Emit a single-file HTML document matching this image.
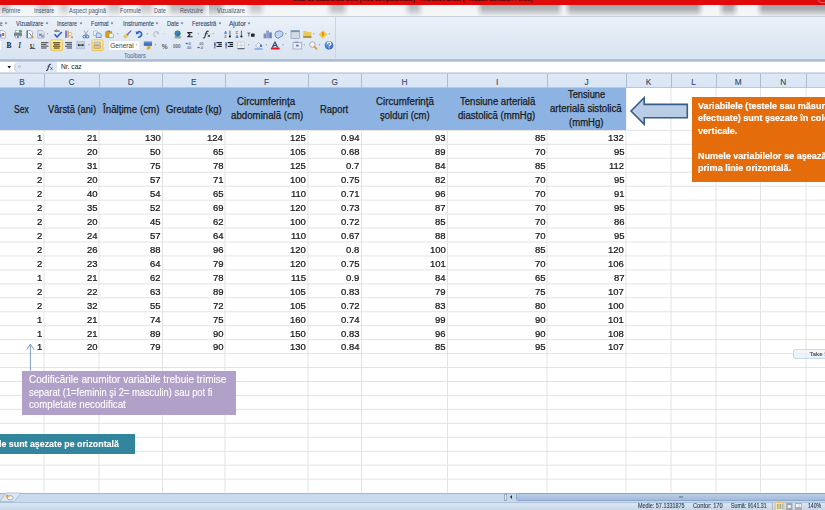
<!DOCTYPE html><html><head><meta charset="utf-8"><style>
*{margin:0;padding:0;box-sizing:border-box}
html,body{width:825px;height:510px;overflow:hidden;background:#fff;font-family:"Liberation Sans",sans-serif}
.a{position:absolute}
.t{position:absolute;white-space:pre;line-height:1;-webkit-text-stroke:0.18px currentColor}
</style></head><body><div id="w" style="position:absolute;left:-4px;top:-4px;width:833px;height:518px;overflow:hidden;filter:blur(0.3px)"><div style="position:absolute;left:4px;top:4px;width:825px;height:510px"><div class="a" style="left:-5px;top:-5px;width:840px;height:9.5px;background:#e10a0a;overflow:hidden"><div class="t" style="left:298.00px;top:-0.60px;font-size:8.5px;font-weight:normal;color:#4a0808;transform:scaleX(0.7066);transform-origin:0 0;-webkit-text-stroke:0.2px currentColor">Date de bază brute 1.xls [Mod compatibilitate] - Microsoft Excel (Product Activation Failed)</div></div>
<svg class="a" style="left:810px;top:0" width="15" height="5"><rect x="8.6" y="-4" width="12" height="6.6" rx="2.5" fill="none" stroke="#e86a6a" stroke-width="0.9"/></svg>
<div class="a" style="left:-5px;top:4.5px;width:840px;height:11.5px;background:linear-gradient(90deg,#f2f4f6 1px,#c0c3c6 8px,#c0c3c6 12px,#f2f4f6 19px,#f2f4f6 39px,#c8cbce 46px,#c8cbce 52px,#f2f4f6 59px,#f2f4f6 61px,#c8cbce 68px,#c8cbce 70px,#f2f4f6 77px,#f2f4f6 109px,#c4c7ca 116px,#c4c7ca 122px,#f2f4f6 129px,#f2f4f6 141px,#c4c7ca 148px,#c4c7ca 154px,#f2f4f6 161px,#f2f4f6 171px,#b8bbbe 178px,#b8bbbe 207px,#f2f4f6 214px,#f2f4f6 207px,#b0b4b8 214px,#b0b4b8 224px,#f2f4f6 231px,#f2f4f6 251px,#c0c3c6 258px,#c0c3c6 264px,#f2f4f6 271px,#f2f4f6 331px,#b8bbbe 338px,#b8bbbe 347px,#f2f4f6 354px,#f2f4f6 409px,#b4bac2 416px,#b4bac2 422px,#f2f4f6 429px,#f2f4f6 481px,#a8adb2 488px,#a8adb2 562px,#f2f4f6 569px,#f2f4f6 569px,#a0a4a8 576px,#a0a4a8 702px,#f2f4f6 709px,#f2f4f6 723px,#a0a4a8 730px,#a0a4a8 737px,#f2f4f6 744px,#f2f4f6 761px,#9ea2a6 768px,#9ea2a6 832px,#f2f4f6 839px)"></div>
<div class="a" style="left:-5px;top:4.5px;width:840px;height:11.5px;background:linear-gradient(rgba(245,247,249,0) 0%,rgba(245,247,249,0.15) 40%,rgba(245,247,249,0.85) 100%)"></div>
<div class="t" style="left:2.00px;top:8.17px;font-size:6.3px;font-weight:normal;color:#4b5a72;transform:scaleX(0.9109);transform-origin:0 0;-webkit-text-stroke:0">Pornire</div>
<div class="t" style="left:34.40px;top:8.17px;font-size:6.3px;font-weight:normal;color:#4b5a72;transform:scaleX(0.8827);transform-origin:0 0;-webkit-text-stroke:0">Inserare</div>
<div class="t" style="left:68.70px;top:8.17px;font-size:6.3px;font-weight:normal;color:#4b5a72;transform:scaleX(0.9241);transform-origin:0 0;-webkit-text-stroke:0">Aspect pagină</div>
<div class="t" style="left:119.50px;top:8.17px;font-size:6.3px;font-weight:normal;color:#4b5a72;transform:scaleX(0.9088);transform-origin:0 0;-webkit-text-stroke:0">Formule</div>
<div class="t" style="left:154.30px;top:8.17px;font-size:6.3px;font-weight:normal;color:#4b5a72;transform:scaleX(0.8867);transform-origin:0 0;-webkit-text-stroke:0">Date</div>
<div class="t" style="left:180.00px;top:8.17px;font-size:6.3px;font-weight:normal;color:#4b5a72;transform:scaleX(0.8759);transform-origin:0 0;-webkit-text-stroke:0">Revizuire</div>
<div class="t" style="left:216.80px;top:8.17px;font-size:6.3px;font-weight:normal;color:#4b5a72;transform:scaleX(0.9087);transform-origin:0 0;-webkit-text-stroke:0">Vizualizare</div>
<div class="a" style="left:-5px;top:16px;width:840px;height:43px;background:linear-gradient(#eaf1f9,#e2eaf5 45%,#d9e4f1);border-top:1px solid #c9d2dc"></div>
<div class="a" style="left:335px;top:17px;width:1px;height:41px;background:#c9d5e4"></div>
<div class="a" style="left:-5px;top:58.7px;width:840px;height:3.4px;background:linear-gradient(#bccbdd,#a6b9d0 45%,#b4c5d9 70%,#d2ddea)"></div>
<div class="t" style="left:-0.50px;top:20.98px;font-size:6.4px;font-weight:normal;color:#33476a;transform:scaleX(0.7023);transform-origin:0 0;-webkit-text-stroke:0.1px currentColor">e</div>
<svg class="a" style="left:3.5px;top:21px" width="4" height="4"><path d="M0.6,1.6 h2.8 l-1.4,1.8z" fill="#66748a"/></svg>
<div class="t" style="left:16.00px;top:20.98px;font-size:6.4px;font-weight:normal;color:#33476a;transform:scaleX(0.8785);transform-origin:0 0;-webkit-text-stroke:0.1px currentColor">Vizualizare</div>
<svg class="a" style="left:44.6px;top:21px" width="4" height="4"><path d="M0.6,1.6 h2.8 l-1.4,1.8z" fill="#66748a"/></svg>
<div class="t" style="left:57.00px;top:20.98px;font-size:6.4px;font-weight:normal;color:#33476a;transform:scaleX(0.8518);transform-origin:0 0;-webkit-text-stroke:0.1px currentColor">Inserare</div>
<svg class="a" style="left:78.7px;top:21px" width="4" height="4"><path d="M0.6,1.6 h2.8 l-1.4,1.8z" fill="#66748a"/></svg>
<div class="t" style="left:91.20px;top:20.98px;font-size:6.4px;font-weight:normal;color:#33476a;transform:scaleX(0.8683);transform-origin:0 0;-webkit-text-stroke:0.1px currentColor">Format</div>
<svg class="a" style="left:110.3px;top:21px" width="4" height="4"><path d="M0.6,1.6 h2.8 l-1.4,1.8z" fill="#66748a"/></svg>
<div class="t" style="left:122.50px;top:20.98px;font-size:6.4px;font-weight:normal;color:#33476a;transform:scaleX(0.9173);transform-origin:0 0;-webkit-text-stroke:0.1px currentColor">Instrumente</div>
<svg class="a" style="left:154.8px;top:21px" width="4" height="4"><path d="M0.6,1.6 h2.8 l-1.4,1.8z" fill="#66748a"/></svg>
<div class="t" style="left:167.10px;top:20.98px;font-size:6.4px;font-weight:normal;color:#33476a;transform:scaleX(0.8728);transform-origin:0 0;-webkit-text-stroke:0.1px currentColor">Date</div>
<svg class="a" style="left:180.4px;top:21px" width="4" height="4"><path d="M0.6,1.6 h2.8 l-1.4,1.8z" fill="#66748a"/></svg>
<div class="t" style="left:192.30px;top:20.98px;font-size:6.4px;font-weight:normal;color:#33476a;transform:scaleX(0.8872);transform-origin:0 0;-webkit-text-stroke:0.1px currentColor">Fereastră</div>
<svg class="a" style="left:217.8px;top:21px" width="4" height="4"><path d="M0.6,1.6 h2.8 l-1.4,1.8z" fill="#66748a"/></svg>
<div class="t" style="left:228.80px;top:20.98px;font-size:6.4px;font-weight:normal;color:#33476a;transform:scaleX(1.0108);transform-origin:0 0;-webkit-text-stroke:0.1px currentColor">Ajutor</div>
<svg class="a" style="left:247.1px;top:21px" width="4" height="4"><path d="M0.6,1.6 h2.8 l-1.4,1.8z" fill="#66748a"/></svg>
<div class="t" style="left:124.40px;top:52.88px;font-size:6.4px;font-weight:normal;color:#66768f;transform:scaleX(0.9011);transform-origin:0 0;-webkit-text-stroke:0.1px currentColor">Toolbars</div>
<svg class="a" style="left:0;top:26px;overflow:visible" width="340" height="26" viewBox="0 26 340 26"><defs>
<linearGradient id="gy" x1="0" y1="0" x2="0" y2="1"><stop offset="0" stop-color="#fff3b8"/><stop offset="1" stop-color="#fddc6a"/></linearGradient>
<linearGradient id="gb" x1="0" y1="0" x2="0" y2="1"><stop offset="0" stop-color="#6e96d8"/><stop offset="1" stop-color="#2f5fb0"/></linearGradient>
<radialGradient id="gh" cx="0.4" cy="0.35" r="0.7"><stop offset="0" stop-color="#7aa6e6"/><stop offset="1" stop-color="#2a5cb4"/></radialGradient>
</defs>
<g>
<!-- row 1 -->
<path d="M0,30.5 h3.5 l2,2 v5.5 h-5.5z" fill="#f4f6fa" stroke="#8d9db4" stroke-width="0.6"/><rect x="2.2" y="33" width="2" height="3" fill="#e24a3a"/><rect x="0" y="34" width="1.6" height="3" fill="#5a86c8"/>
<!-- printer -->
<rect x="15.5" y="30.4" width="5" height="3" fill="#f6f7f9" stroke="#8e949c" stroke-width="0.5"/>
<rect x="14" y="32.6" width="8" height="4" rx="0.8" fill="#7c828a"/><rect x="15.5" y="35.8" width="5" height="2.2" fill="#eef2f8" stroke="#8e949c" stroke-width="0.4"/><rect x="17" y="36" width="2" height="1.8" fill="#4b8be0"/>
<circle cx="20.5" cy="31.3" r="1.5" fill="#3fae48"/>
<!-- print preview -->
<path d="M26.8,30.6 h4.2 l1.6,1.6 v5.8 h-5.8z" fill="#fbfcfe" stroke="#6b7d98" stroke-width="0.6"/><rect x="26.8" y="30.6" width="1" height="7.4" fill="#3f5a88"/><circle cx="32.3" cy="37" r="1.3" fill="#e39a2c"/><path d="M29.5,33 l2,3" stroke="#4a6fa8" stroke-width="0.8"/>
<!-- third doc icon -->
<path d="M37.8,30.6 h4.5 l1.8,1.8 v5.6 h-6.3z" fill="#e7ebf2" stroke="#8a96a8" stroke-width="0.6"/><rect x="39" y="33.5" width="3.2" height="2.6" fill="#6e9bd8"/><rect x="41" y="35" width="3" height="2.5" fill="#9aa4b2"/>
<path d="M46.8,33.6 h1.6 l-0.8,0.9z" fill="#5b6677"/>
<!-- spell check -->
<text x="54.2" y="32.3" font-size="3.2" font-weight="bold" fill="#3a3f48" font-family="Liberation Sans">abc</text>
<path d="M54.6,34.3 l2.4,2.8 l4.8,-5" stroke="#2a57c6" stroke-width="1.5" fill="none" stroke-linejoin="round"/>
<!-- research -->
<rect x="65" y="30.6" width="2.6" height="7.2" fill="#8a78d6"/><rect x="67.4" y="30.8" width="5" height="6.8" fill="#ede8d0"/><rect x="67.6" y="30.8" width="1.4" height="6.8" fill="#d8b040"/><circle cx="70.2" cy="34" r="1.6" fill="#f8f8f8" stroke="#888" stroke-width="0.4"/><circle cx="72" cy="37.3" r="1" fill="#d48a20"/>
<!-- scissors -->
<path d="M84,30.5 l2.5,4.5 M88,30.5 l-2.5,4.5" stroke="#8a9098" stroke-width="0.8"/>
<circle cx="84.4" cy="36.6" r="1.4" fill="none" stroke="#3b63c0" stroke-width="1"/><circle cx="87.4" cy="36.6" r="1.4" fill="none" stroke="#3b63c0" stroke-width="1"/>
<!-- copy -->
<path d="M93.5,31 h3.5 l1.3,1.3 v3.2 h-4.8z" fill="#f3f6fb" stroke="#7f93b8" stroke-width="0.5"/>
<path d="M96.2,33 h3.5 l1.5,1.5 v3 h-5z" fill="#c8dbf4" stroke="#3d6bc0" stroke-width="0.6"/>
<!-- paste -->
<rect x="105.7" y="31.4" width="6" height="6" rx="0.6" fill="#e0a420" stroke="#a2741a" stroke-width="0.5"/><rect x="107.4" y="30.6" width="2.6" height="1.5" fill="#7a7f88"/>
<path d="M109,33.3 h3 l1.4,1.4 v3 h-4.4z" fill="#f7f9fc" stroke="#6c7580" stroke-width="0.5"/>
<path d="M116.8,33.6 h1.6 l-0.8,0.9z" fill="#5b6677"/>
<!-- format painter -->
<path d="M123.5,36.3 l3.2,-2.6 l1.6,1.8 l-2.8,2.8z" fill="#f0d050" stroke="#b8942a" stroke-width="0.4"/>
<path d="M127.5,34.5 l3.4,-3.6" stroke="#6b5cc0" stroke-width="1.3" stroke-linecap="round"/>
<!-- undo -->
<path d="M137,32.8 q3.5,-2.6 4.6,0.8 q0.6,2.4 -3,3.6" stroke="#2d66cf" stroke-width="1.6" fill="none" stroke-linecap="round"/><path d="M135.6,31 l0.6,3.6 l3,-1.2z" fill="#2d66cf"/>
<path d="M146.5,33.6 h1.6 l-0.8,0.9z" fill="#5b6677"/>
<!-- redo (disabled) -->
<path d="M158.5,32.8 q-3.5,-2.6 -4.6,0.8 q-0.4,2 1.6,3.4" stroke="#b9c0ca" stroke-width="1.2" fill="none"/><path d="M159.2,31.2 l-0.4,3.2 l-2.6,-1z" fill="#b9c0ca"/>
<path d="M163,33.6 h1.6 l-0.8,0.9z" fill="#b5bcc6"/>
<!-- globe -->
<ellipse cx="177.8" cy="37.3" rx="3.6" ry="1.2" fill="#8ea3c8"/>
<circle cx="177.6" cy="33.6" r="3" fill="#2c8a3e"/><path d="M175.2,32.6 q2,-2.4 4.6,-1 q-1,2 -2.2,1.4 q-1.2,1.6 0.4,3.6 q-2.4,0 -2.8,-4z" fill="#3f7fd8"/>
<!-- sigma -->
<path d="M187.3,32 h5 v1.2 h-3.2 l1.8,1.5 l-1.8,1.5 h3.4 v1 h-5.2 v-0.9 l2,-1.6 l-2,-1.6z" fill="#1d1f24"/>
<path d="M197.5,33.6 h1.6 l-0.8,0.9z" fill="#5b6677"/>
<!-- fx -->
<path d="M208.2,31.3 q-1.5,-0.4 -2.2,1.8 l-1.2,3.8 q-0.5,1.1 -1.3,0.9" stroke="#45494f" stroke-width="1.3" fill="none" stroke-linecap="round"/><path d="M204.8,33.6 h3" stroke="#45494f" stroke-width="0.8"/><path d="M207.8,34.6 l2.2,2.4 M210,34.6 l-2.2,2.4" stroke="#45494f" stroke-width="1"/>
<path d="M212.3,33.6 h1.6 l-0.8,0.9z" fill="#5b6677"/>
<!-- sort AZ -->
<text x="224.1" y="33.8" font-size="4" font-weight="bold" fill="#3a6cc8" font-family="Liberation Sans">A</text><text x="224.3" y="37.9" font-size="4" font-weight="bold" fill="#cc4036" font-family="Liberation Sans">Z</text>
<rect x="229.4" y="30.6" width="1.1" height="5.5" fill="#6d737c"/><circle cx="229.95" cy="36.5" r="1.1" fill="#1d1f24"/>
<!-- sort ZA -->
<text x="235.6" y="33.8" font-size="4" font-weight="bold" fill="#cc4036" font-family="Liberation Sans">Z</text><text x="235.5" y="37.9" font-size="4" font-weight="bold" fill="#3a6cc8" font-family="Liberation Sans">A</text>
<rect x="240.9" y="30.6" width="1.1" height="5.5" fill="#6d737c"/><circle cx="241.45" cy="36.5" r="1.1" fill="#1d1f24"/>
<!-- filter -->
<path d="M247,32.6 h3.6 l-1.3,1.6 v2.4 h-1 v-2.4z" fill="#6a6f78"/><rect x="251" y="33.6" width="3.6" height="3.2" rx="0.6" fill="#22252b"/>
<!-- chart -->
<rect x="263.6" y="33.5" width="2.4" height="4.8" fill="#7a8fbc"/><rect x="266.2" y="30.6" width="2.8" height="7.7" fill="#8a9ec8"/><rect x="269.2" y="32.4" width="2.6" height="5.9" fill="#6b82b4"/>
<!-- shapes -->
<path d="M275,34.5 q0,-3.5 3.8,-3.6 q4.2,0 4.2,3.2 q0,2.6 -3,3 q-0.8,1.5 -2.6,1 q-2.4,-0.6 -2.4,-3.6z" fill="#c2d6f2" stroke="#4d78bd" stroke-width="0.8"/>
<path d="M285,33.6 h1.6 l-0.8,0.9z" fill="#5b6677"/>
<!-- form window -->
<rect x="291" y="30.6" width="8.4" height="7.8" fill="#d5dbe4" stroke="#7f90ab" stroke-width="0.6"/><rect x="291" y="30.6" width="8.4" height="1.5" fill="#6c8fcf"/>
<!-- folder -->
<path d="M303.2,31 h3 l1,1 h4.2 v5.7 h-8.2z" fill="#e8c95a"/><rect x="303.2" y="36.3" width="8.2" height="1.4" fill="#9a7a2a"/>
<path d="M313,33.6 h1.6 l-0.8,0.9z" fill="#5b6677"/>
<!-- diamond -->
<path d="M322.9,30.7 l3.9,3.8 l-3.9,3.8 l-3.9,-3.8z" fill="#f6cf2a" stroke="#e0a020" stroke-width="0.4"/><rect x="322.3" y="32.2" width="1.3" height="3.6" fill="#e8661e"/>
<path d="M328.5,33.6 h1.6 l-0.8,0.9z" fill="#5b6677"/>

<!-- row 2 -->
<rect x="-1" y="40.6" width="2.6" height="9.6" fill="#fff" stroke="#cdd8e6" stroke-width="0.5"/>
<text x="6.4" y="48.4" font-size="7.4" font-weight="bold" fill="#1a1a1a" font-family="Liberation Serif">B</text>
<text x="18.2" y="48.4" font-size="7.2" font-style="italic" font-weight="bold" fill="#3b3f46" font-family="Liberation Serif">I</text>
<text x="29.8" y="47.6" font-size="6.6" font-weight="bold" fill="#2e3238" font-family="Liberation Serif">U</text><rect x="29.8" y="48.2" width="5.4" height="0.8" fill="#2e3238"/>
<g fill="#5a5f66"><rect x="41" y="42" width="7.5" height="1.2"/><rect x="41" y="43.8" width="5.5" height="1.2"/><rect x="41" y="45.6" width="7.5" height="1.2"/><rect x="41" y="47.4" width="5.5" height="1.2"/></g>
<rect x="50.8" y="39.9" width="11.7" height="10.8" rx="1.2" fill="url(#gy)" stroke="#e6bb4e" stroke-width="0.8"/>
<g fill="#6d5d2e"><rect x="53" y="42" width="7.4" height="1.3"/><rect x="53.8" y="43.8" width="5.8" height="1.3"/><rect x="53" y="45.6" width="7.4" height="1.3"/><rect x="53.8" y="47.4" width="5.8" height="1.3"/></g>
<g fill="#5a5f66"><rect x="65" y="42" width="7" height="1.2"/><rect x="66.6" y="43.8" width="5.4" height="1.2"/><rect x="65" y="45.6" width="7" height="1.2"/><rect x="66.6" y="47.4" width="5.4" height="1.2"/></g>
<!-- merge -->
<rect x="76.8" y="41.3" width="7.9" height="7.6" fill="#c5d3e8" stroke="#96a6be" stroke-width="0.4"/><rect x="78" y="44.6" width="5.6" height="1" fill="#22252b"/><path d="M77.6,45.1 l1.6,-1.3 v2.6z M83.9,45.1 l-1.6,-1.3 v2.6z" fill="#22252b"/>
<path d="M88.2,44.6 h1.6 l-0.8,0.9z" fill="#5b6677"/>
<!-- wrap text -->
<rect x="92.1" y="39.9" width="10.9" height="10.8" rx="1.2" fill="url(#gy)" stroke="#e6bb4e" stroke-width="0.8"/>
<rect x="94" y="42" width="6.6" height="2.4" fill="#c8d4e8" stroke="#8c7a48" stroke-width="0.4"/><rect x="94" y="45.6" width="6.6" height="2.6" fill="#e8b8a0" stroke="#8c7a48" stroke-width="0.4"/>
<!-- general combo -->
<rect x="108.4" y="40.8" width="31.4" height="9.4" fill="#fff" stroke="#d4deea" stroke-width="0.6"/>
<text x="110.2" y="47.5" font-size="6.6" fill="#3b3f46" font-family="Liberation Sans">General</text>
<path d="M135.7,44.6 h1.6 l-0.8,0.9z" fill="#5b6677"/>
<!-- currency -->
<rect x="143.8" y="41.4" width="8.2" height="4.4" fill="url(#gb)"/><path d="M147.5,46 h3 v2.6 q-1.6,1.4 -4,0.6z" fill="#e2a834"/>
<path d="M154.8,44.6 h1.6 l-0.8,0.9z" fill="#5b6677"/>
<text x="161.8" y="48.6" font-size="6.6" font-weight="bold" fill="#5a5f66" font-family="Liberation Sans">%</text>
<text x="173" y="48.2" font-size="4.6" font-weight="bold" fill="#6a6f78" font-family="Liberation Sans">000</text>
<!-- inc decimal -->
<text x="187.8" y="44.6" font-size="3.6" font-weight="bold" fill="#6a6f78" font-family="Liberation Sans">.0</text><text x="186.2" y="49" font-size="3.6" font-weight="bold" fill="#6a6f78" font-family="Liberation Sans">.00</text><path d="M185.2,43.4 l1.8,-1 v2z" fill="#2e66d6"/><rect x="186.6" y="43" width="1.6" height="0.8" fill="#2e66d6"/>
<!-- dec decimal -->
<text x="198.6" y="44.6" font-size="3.6" font-weight="bold" fill="#6a6f78" font-family="Liberation Sans">.00</text><text x="200" y="49" font-size="3.6" font-weight="bold" fill="#6a6f78" font-family="Liberation Sans">.0</text><path d="M197,47.4 l1.8,-1 v2z" fill="#2e66d6"/><rect x="198.4" y="47" width="1.6" height="0.8" fill="#2e66d6"/>
<!-- indent -->
<g fill="#23262c"><rect x="216.5" y="42" width="5.3" height="1.2"/><rect x="218.4" y="43.9" width="3.4" height="1.2"/><rect x="216.5" y="45.8" width="5.3" height="1.2"/></g><rect x="214" y="42" width="1.4" height="6.5" fill="#7a8088"/><path d="M213.6,44.5 l2.2,-1.3 v2.6z" fill="#2e66d6"/>
<g fill="#23262c"><rect x="227.8" y="42" width="5.3" height="1.2"/><rect x="229.7" y="43.9" width="3.4" height="1.2"/><rect x="227.8" y="45.8" width="5.3" height="1.2"/></g><rect x="225.4" y="42" width="1.4" height="6.5" fill="#7a8088"/><path d="M224.8,44.5 l2.2,-1.3 v2.6z" fill="#2e66d6"/>
<!-- borders -->
<rect x="237.6" y="42" width="6.9" height="6.8" fill="#f2f4f7" stroke="#b4bcc8" stroke-width="0.5"/><line x1="241.05" y1="42" x2="241.05" y2="48.8" stroke="#b4bcc8" stroke-width="0.5"/><line x1="237.6" y1="45.4" x2="244.5" y2="45.4" stroke="#b4bcc8" stroke-width="0.5"/><rect x="237.6" y="48.2" width="6.9" height="1" fill="#4a4f58"/>
<path d="M248,44.6 h1.6 l-0.8,0.9z" fill="#5b6677"/>
<!-- fill color -->
<path d="M255.5,45.4 l3,-3 l3,3 l-3,2.6z" fill="#eef2f8" stroke="#7d8796" stroke-width="0.5"/><circle cx="261" cy="45.8" r="1.2" fill="#3a74d8"/><rect x="254.5" y="48.4" width="8" height="1.2" fill="#5f9ae6"/>
<path d="M265.6,44.6 h1.6 l-0.8,0.9z" fill="#5b6677"/>
<!-- font color -->
<path d="M271.6,47.6 l3,-6 h0.8 l2.9,6 h-1.5 l-0.7,-1.5 h-2.2 l-0.7,1.5z M274.1,45.1 h1.7 l-0.85,-2z" fill="#2f4170" fill-rule="evenodd"/>
<rect x="270.9" y="47.4" width="8.8" height="2.1" rx="0.6" fill="#e8141a"/>
<path d="M282.2,44.6 h1.6 l-0.8,0.9z" fill="#5b6677"/>
<!-- camera -->
<rect x="293" y="42.4" width="8.8" height="6.6" fill="#e9edf3" stroke="#8792a2" stroke-width="0.6"/><rect x="294.5" y="41.6" width="4" height="1.2" fill="#8792a2"/><rect x="296.2" y="44.7" width="2.4" height="1.8" fill="#3c74d6"/>
<path d="M303.4,44.6 h1.6 l-0.8,0.9z" fill="#5b6677"/>
<!-- zoom -->
<circle cx="312.4" cy="44.6" r="2.8" fill="#f8fafd" stroke="#9aa3ae" stroke-width="0.9"/><path d="M314.3,46.6 l2.2,2.3" stroke="#d59b2a" stroke-width="1.6" stroke-linecap="round"/>
<path d="M318.7,44.6 h1.6 l-0.8,0.9z" fill="#5b6677"/>
<!-- help -->
<circle cx="329" cy="45.25" r="4.3" fill="url(#gh)"/>
<path d="M327.4,44 q0,-1.9 1.7,-1.9 q1.8,0 1.8,1.6 q0,1 -1.1,1.5 q-0.6,0.3 -0.6,1" stroke="#fff" stroke-width="1.1" fill="none"/><circle cx="329.15" cy="47.8" r="0.65" fill="#fff"/>
</g>
</svg>
<div class="a" style="left:-5px;top:62px;width:840px;height:10.5px;background:#fff"></div>
<div class="a" style="left:14px;top:62px;width:42.5px;height:10.5px;background:#dfe8f4;border-radius:6px 0 0 6px;border-left:1px solid #b9c9dc"></div>
<div class="a" style="left:17.9px;top:64.9px;width:3px;height:3px;border-radius:50%;border:0.6px solid #b0bccb;background:#e9eef5"></div>
<svg class="a" style="left:0;top:0" width="20" height="80"><path d="M7.5,65.9 h3.5 l-1.75,2.6z" fill="#111"/></svg>
<svg class="a" style="left:0;top:0" width="60" height="80"><path d="M50.6,64.3 q-1.2,-0.3 -1.8,1.6 l-1.1,3.6 q-0.5,1.1 -1.2,0.9" stroke="#2e3f5c" stroke-width="1.1" fill="none" stroke-linecap="round"/><path d="M47.6,66.2 h2.6" stroke="#2e3f5c" stroke-width="0.7"/><path d="M50.6,67.4 l1.8,2.2 M52.4,67.4 l-1.8,2.2" stroke="#2e3f5c" stroke-width="0.9"/></svg>
<div class="t" style="left:60.50px;top:63.00px;font-size:7.8px;font-weight:normal;color:#222;transform:scaleX(0.8528);transform-origin:0 0;-webkit-text-stroke:0.05px currentColor">Nr. caz</div>
<div class="a" style="left:-5px;top:71.7px;width:840px;height:2.7px;background:linear-gradient(#dbe4ee,#b9c9db)"></div>
<div class="a" style="left:-5px;top:74.4px;width:840px;height:13.6px;background:linear-gradient(#e0e9f6,#d9e5f4)"></div>
<div class="a" style="left:-5px;top:87.2px;width:840px;height:1px;background:#b7c8dc"></div>
<div class="t" style="left:0px;width:44px;text-align:center;top:77.9px;font-size:8.3px;color:#30476a;-webkit-text-stroke:0.1px currentColor">B</div>
<div class="t" style="left:44px;width:55px;text-align:center;top:77.9px;font-size:8.3px;color:#30476a;-webkit-text-stroke:0.1px currentColor">C</div>
<div class="t" style="left:99px;width:63.5px;text-align:center;top:77.9px;font-size:8.3px;color:#30476a;-webkit-text-stroke:0.1px currentColor">D</div>
<div class="t" style="left:162.5px;width:62.5px;text-align:center;top:77.9px;font-size:8.3px;color:#30476a;-webkit-text-stroke:0.1px currentColor">E</div>
<div class="t" style="left:225px;width:83px;text-align:center;top:77.9px;font-size:8.3px;color:#30476a;-webkit-text-stroke:0.1px currentColor">F</div>
<div class="t" style="left:308px;width:53.5px;text-align:center;top:77.9px;font-size:8.3px;color:#30476a;-webkit-text-stroke:0.1px currentColor">G</div>
<div class="t" style="left:361.5px;width:86.0px;text-align:center;top:77.9px;font-size:8.3px;color:#30476a;-webkit-text-stroke:0.1px currentColor">H</div>
<div class="t" style="left:447.5px;width:99.5px;text-align:center;top:77.9px;font-size:8.3px;color:#30476a;-webkit-text-stroke:0.1px currentColor">I</div>
<div class="t" style="left:547px;width:79px;text-align:center;top:77.9px;font-size:8.3px;color:#30476a;-webkit-text-stroke:0.1px currentColor">J</div>
<div class="t" style="left:626px;width:45px;text-align:center;top:77.9px;font-size:8.3px;color:#30476a;-webkit-text-stroke:0.1px currentColor">K</div>
<div class="t" style="left:671px;width:45px;text-align:center;top:77.9px;font-size:8.3px;color:#30476a;-webkit-text-stroke:0.1px currentColor">L</div>
<div class="t" style="left:716px;width:44.5px;text-align:center;top:77.9px;font-size:8.3px;color:#30476a;-webkit-text-stroke:0.1px currentColor">M</div>
<div class="t" style="left:760.5px;width:45.5px;text-align:center;top:77.9px;font-size:8.3px;color:#30476a;-webkit-text-stroke:0.1px currentColor">N</div>
<div class="a" style="left:43.5px;top:74.4px;width:1px;height:13.6px;background:#abbdd3"></div>
<div class="a" style="left:98.5px;top:74.4px;width:1px;height:13.6px;background:#abbdd3"></div>
<div class="a" style="left:162.0px;top:74.4px;width:1px;height:13.6px;background:#abbdd3"></div>
<div class="a" style="left:224.5px;top:74.4px;width:1px;height:13.6px;background:#abbdd3"></div>
<div class="a" style="left:307.5px;top:74.4px;width:1px;height:13.6px;background:#abbdd3"></div>
<div class="a" style="left:361.0px;top:74.4px;width:1px;height:13.6px;background:#abbdd3"></div>
<div class="a" style="left:447.0px;top:74.4px;width:1px;height:13.6px;background:#abbdd3"></div>
<div class="a" style="left:546.5px;top:74.4px;width:1px;height:13.6px;background:#abbdd3"></div>
<div class="a" style="left:625.5px;top:74.4px;width:1px;height:13.6px;background:#abbdd3"></div>
<div class="a" style="left:670.5px;top:74.4px;width:1px;height:13.6px;background:#abbdd3"></div>
<div class="a" style="left:715.5px;top:74.4px;width:1px;height:13.6px;background:#abbdd3"></div>
<div class="a" style="left:760.0px;top:74.4px;width:1px;height:13.6px;background:#abbdd3"></div>
<div class="a" style="left:805.5px;top:74.4px;width:1px;height:13.6px;background:#abbdd3"></div>
<div class="a" style="left:850.5px;top:74.4px;width:1px;height:13.6px;background:#abbdd3"></div>
<svg class="a" style="left:0;top:0" width="825" height="510"><g stroke="#e2e3e4" stroke-width="1"><line x1="0" x2="825" y1="130.40" y2="130.40"/><line x1="0" x2="825" y1="144.35" y2="144.35"/><line x1="0" x2="825" y1="158.30" y2="158.30"/><line x1="0" x2="825" y1="172.25" y2="172.25"/><line x1="0" x2="825" y1="186.20" y2="186.20"/><line x1="0" x2="825" y1="200.15" y2="200.15"/><line x1="0" x2="825" y1="214.10" y2="214.10"/><line x1="0" x2="825" y1="228.05" y2="228.05"/><line x1="0" x2="825" y1="242.00" y2="242.00"/><line x1="0" x2="825" y1="255.95" y2="255.95"/><line x1="0" x2="825" y1="269.90" y2="269.90"/><line x1="0" x2="825" y1="283.85" y2="283.85"/><line x1="0" x2="825" y1="297.80" y2="297.80"/><line x1="0" x2="825" y1="311.75" y2="311.75"/><line x1="0" x2="825" y1="325.70" y2="325.70"/><line x1="0" x2="825" y1="339.65" y2="339.65"/><line x1="0" x2="825" y1="353.60" y2="353.60"/><line x1="0" x2="825" y1="367.55" y2="367.55"/><line x1="0" x2="825" y1="381.50" y2="381.50"/><line x1="0" x2="825" y1="395.45" y2="395.45"/><line x1="0" x2="825" y1="409.40" y2="409.40"/><line x1="0" x2="825" y1="423.35" y2="423.35"/><line x1="0" x2="825" y1="437.30" y2="437.30"/><line x1="0" x2="825" y1="451.25" y2="451.25"/><line x1="0" x2="825" y1="465.20" y2="465.20"/><line x1="0" x2="825" y1="479.15" y2="479.15"/><line x1="44" x2="44" y1="88.0" y2="492.6"/><line x1="99" x2="99" y1="88.0" y2="492.6"/><line x1="162.5" x2="162.5" y1="88.0" y2="492.6"/><line x1="225" x2="225" y1="88.0" y2="492.6"/><line x1="308" x2="308" y1="88.0" y2="492.6"/><line x1="361.5" x2="361.5" y1="88.0" y2="492.6"/><line x1="447.5" x2="447.5" y1="88.0" y2="492.6"/><line x1="547" x2="547" y1="88.0" y2="492.6"/><line x1="626" x2="626" y1="88.0" y2="492.6"/><line x1="671" x2="671" y1="88.0" y2="492.6"/><line x1="716" x2="716" y1="88.0" y2="492.6"/><line x1="760.5" x2="760.5" y1="88.0" y2="492.6"/><line x1="806" x2="806" y1="88.0" y2="492.6"/><line x1="851" x2="851" y1="88.0" y2="492.6"/></g></svg>
<div class="a" style="left:0;top:88.0px;width:626px;height:42.400000000000006px;background:#8db3e2"></div>
<div class="t" style="left:14.00px;top:104.53px;font-size:10.0px;font-weight:normal;color:#1a1a1a;transform:scaleX(0.8531);transform-origin:0 0;-webkit-text-stroke:0.25px currentColor">Sex</div>
<div class="t" style="left:48.00px;top:104.53px;font-size:10.0px;font-weight:normal;color:#1a1a1a;transform:scaleX(0.9287);transform-origin:0 0;-webkit-text-stroke:0.25px currentColor">Vârstă (ani)</div>
<div class="t" style="left:103.10px;top:104.53px;font-size:10.0px;font-weight:normal;color:#1a1a1a;transform:scaleX(0.9760);transform-origin:0 0;-webkit-text-stroke:0.25px currentColor">Înălţime (cm)</div>
<div class="t" style="left:166.30px;top:104.53px;font-size:10.0px;font-weight:normal;color:#1a1a1a;transform:scaleX(0.9438);transform-origin:0 0;-webkit-text-stroke:0.25px currentColor">Greutate (kg)</div>
<div class="t" style="left:237.30px;top:97.13px;font-size:10.0px;font-weight:normal;color:#1a1a1a;transform:scaleX(0.9771);transform-origin:0 0;-webkit-text-stroke:0.25px currentColor">Circumferinţa</div>
<div class="t" style="left:230.50px;top:110.73px;font-size:10.0px;font-weight:normal;color:#1a1a1a;transform:scaleX(0.9694);transform-origin:0 0;-webkit-text-stroke:0.25px currentColor">abdominală (cm)</div>
<div class="t" style="left:320.40px;top:104.53px;font-size:10.0px;font-weight:normal;color:#1a1a1a;transform:scaleX(0.9362);transform-origin:0 0;-webkit-text-stroke:0.25px currentColor">Raport</div>
<div class="t" style="left:375.80px;top:97.13px;font-size:10.0px;font-weight:normal;color:#1a1a1a;transform:scaleX(0.9721);transform-origin:0 0;-webkit-text-stroke:0.25px currentColor">Circumferinţă</div>
<div class="t" style="left:380.40px;top:110.73px;font-size:10.0px;font-weight:normal;color:#1a1a1a;transform:scaleX(0.9516);transform-origin:0 0;-webkit-text-stroke:0.25px currentColor">şolduri (cm)</div>
<div class="t" style="left:459.60px;top:97.13px;font-size:10.0px;font-weight:normal;color:#1a1a1a;transform:scaleX(0.9539);transform-origin:0 0;-webkit-text-stroke:0.25px currentColor">Tensiune arterială</div>
<div class="t" style="left:458.40px;top:110.73px;font-size:10.0px;font-weight:normal;color:#1a1a1a;transform:scaleX(0.9581);transform-origin:0 0;-webkit-text-stroke:0.25px currentColor">diastolică (mmHg)</div>
<div class="t" style="left:567.70px;top:90.33px;font-size:10.0px;font-weight:normal;color:#1a1a1a;transform:scaleX(0.9268);transform-origin:0 0;-webkit-text-stroke:0.25px currentColor">Tensiune</div>
<div class="t" style="left:550.20px;top:104.23px;font-size:10.0px;font-weight:normal;color:#1a1a1a;transform:scaleX(0.9614);transform-origin:0 0;-webkit-text-stroke:0.25px currentColor">arterială sistolică</div>
<div class="t" style="left:569.20px;top:117.63px;font-size:10.0px;font-weight:normal;color:#1a1a1a;transform:scaleX(0.9555);transform-origin:0 0;-webkit-text-stroke:0.25px currentColor">(mmHg)</div>
<div class="t" style="left:36.91px;top:133.20px;font-size:9.8px;font-weight:normal;color:#161616;transform:scaleX(0.9700);transform-origin:0 0;-webkit-text-stroke:0.24px currentColor">1</div>
<div class="t" style="left:86.63px;top:133.20px;font-size:9.8px;font-weight:normal;color:#161616;transform:scaleX(0.9700);transform-origin:0 0;-webkit-text-stroke:0.24px currentColor">21</div>
<div class="t" style="left:144.84px;top:133.20px;font-size:9.8px;font-weight:normal;color:#161616;transform:scaleX(0.9700);transform-origin:0 0;-webkit-text-stroke:0.24px currentColor">130</div>
<div class="t" style="left:207.34px;top:133.20px;font-size:9.8px;font-weight:normal;color:#161616;transform:scaleX(0.9700);transform-origin:0 0;-webkit-text-stroke:0.24px currentColor">124</div>
<div class="t" style="left:290.34px;top:133.20px;font-size:9.8px;font-weight:normal;color:#161616;transform:scaleX(0.9700);transform-origin:0 0;-webkit-text-stroke:0.24px currentColor">125</div>
<div class="t" style="left:341.20px;top:133.20px;font-size:9.8px;font-weight:normal;color:#161616;transform:scaleX(0.9700);transform-origin:0 0;-webkit-text-stroke:0.24px currentColor">0.94</div>
<div class="t" style="left:435.13px;top:133.20px;font-size:9.8px;font-weight:normal;color:#161616;transform:scaleX(0.9700);transform-origin:0 0;-webkit-text-stroke:0.24px currentColor">93</div>
<div class="t" style="left:534.63px;top:133.20px;font-size:9.8px;font-weight:normal;color:#161616;transform:scaleX(0.9700);transform-origin:0 0;-webkit-text-stroke:0.24px currentColor">85</div>
<div class="t" style="left:608.34px;top:133.20px;font-size:9.8px;font-weight:normal;color:#161616;transform:scaleX(0.9700);transform-origin:0 0;-webkit-text-stroke:0.24px currentColor">132</div>
<div class="t" style="left:36.91px;top:147.15px;font-size:9.8px;font-weight:normal;color:#161616;transform:scaleX(0.9700);transform-origin:0 0;-webkit-text-stroke:0.24px currentColor">2</div>
<div class="t" style="left:86.63px;top:147.15px;font-size:9.8px;font-weight:normal;color:#161616;transform:scaleX(0.9700);transform-origin:0 0;-webkit-text-stroke:0.24px currentColor">20</div>
<div class="t" style="left:150.13px;top:147.15px;font-size:9.8px;font-weight:normal;color:#161616;transform:scaleX(0.9700);transform-origin:0 0;-webkit-text-stroke:0.24px currentColor">50</div>
<div class="t" style="left:212.63px;top:147.15px;font-size:9.8px;font-weight:normal;color:#161616;transform:scaleX(0.9700);transform-origin:0 0;-webkit-text-stroke:0.24px currentColor">65</div>
<div class="t" style="left:290.34px;top:147.15px;font-size:9.8px;font-weight:normal;color:#161616;transform:scaleX(0.9700);transform-origin:0 0;-webkit-text-stroke:0.24px currentColor">105</div>
<div class="t" style="left:341.20px;top:147.15px;font-size:9.8px;font-weight:normal;color:#161616;transform:scaleX(0.9700);transform-origin:0 0;-webkit-text-stroke:0.24px currentColor">0.68</div>
<div class="t" style="left:435.13px;top:147.15px;font-size:9.8px;font-weight:normal;color:#161616;transform:scaleX(0.9700);transform-origin:0 0;-webkit-text-stroke:0.24px currentColor">89</div>
<div class="t" style="left:534.63px;top:147.15px;font-size:9.8px;font-weight:normal;color:#161616;transform:scaleX(0.9700);transform-origin:0 0;-webkit-text-stroke:0.24px currentColor">70</div>
<div class="t" style="left:613.63px;top:147.15px;font-size:9.8px;font-weight:normal;color:#161616;transform:scaleX(0.9700);transform-origin:0 0;-webkit-text-stroke:0.24px currentColor">95</div>
<div class="t" style="left:36.91px;top:161.10px;font-size:9.8px;font-weight:normal;color:#161616;transform:scaleX(0.9700);transform-origin:0 0;-webkit-text-stroke:0.24px currentColor">2</div>
<div class="t" style="left:86.63px;top:161.10px;font-size:9.8px;font-weight:normal;color:#161616;transform:scaleX(0.9700);transform-origin:0 0;-webkit-text-stroke:0.24px currentColor">31</div>
<div class="t" style="left:150.13px;top:161.10px;font-size:9.8px;font-weight:normal;color:#161616;transform:scaleX(0.9700);transform-origin:0 0;-webkit-text-stroke:0.24px currentColor">75</div>
<div class="t" style="left:212.63px;top:161.10px;font-size:9.8px;font-weight:normal;color:#161616;transform:scaleX(0.9700);transform-origin:0 0;-webkit-text-stroke:0.24px currentColor">78</div>
<div class="t" style="left:290.34px;top:161.10px;font-size:9.8px;font-weight:normal;color:#161616;transform:scaleX(0.9700);transform-origin:0 0;-webkit-text-stroke:0.24px currentColor">125</div>
<div class="t" style="left:346.49px;top:161.10px;font-size:9.8px;font-weight:normal;color:#161616;transform:scaleX(0.9700);transform-origin:0 0;-webkit-text-stroke:0.24px currentColor">0.7</div>
<div class="t" style="left:435.13px;top:161.10px;font-size:9.8px;font-weight:normal;color:#161616;transform:scaleX(0.9700);transform-origin:0 0;-webkit-text-stroke:0.24px currentColor">84</div>
<div class="t" style="left:534.63px;top:161.10px;font-size:9.8px;font-weight:normal;color:#161616;transform:scaleX(0.9700);transform-origin:0 0;-webkit-text-stroke:0.24px currentColor">85</div>
<div class="t" style="left:609.04px;top:161.10px;font-size:9.8px;font-weight:normal;color:#161616;transform:scaleX(0.9700);transform-origin:0 0;-webkit-text-stroke:0.24px currentColor">112</div>
<div class="t" style="left:36.91px;top:175.05px;font-size:9.8px;font-weight:normal;color:#161616;transform:scaleX(0.9700);transform-origin:0 0;-webkit-text-stroke:0.24px currentColor">2</div>
<div class="t" style="left:86.63px;top:175.05px;font-size:9.8px;font-weight:normal;color:#161616;transform:scaleX(0.9700);transform-origin:0 0;-webkit-text-stroke:0.24px currentColor">20</div>
<div class="t" style="left:150.13px;top:175.05px;font-size:9.8px;font-weight:normal;color:#161616;transform:scaleX(0.9700);transform-origin:0 0;-webkit-text-stroke:0.24px currentColor">57</div>
<div class="t" style="left:212.63px;top:175.05px;font-size:9.8px;font-weight:normal;color:#161616;transform:scaleX(0.9700);transform-origin:0 0;-webkit-text-stroke:0.24px currentColor">71</div>
<div class="t" style="left:290.34px;top:175.05px;font-size:9.8px;font-weight:normal;color:#161616;transform:scaleX(0.9700);transform-origin:0 0;-webkit-text-stroke:0.24px currentColor">100</div>
<div class="t" style="left:341.20px;top:175.05px;font-size:9.8px;font-weight:normal;color:#161616;transform:scaleX(0.9700);transform-origin:0 0;-webkit-text-stroke:0.24px currentColor">0.75</div>
<div class="t" style="left:435.13px;top:175.05px;font-size:9.8px;font-weight:normal;color:#161616;transform:scaleX(0.9700);transform-origin:0 0;-webkit-text-stroke:0.24px currentColor">82</div>
<div class="t" style="left:534.63px;top:175.05px;font-size:9.8px;font-weight:normal;color:#161616;transform:scaleX(0.9700);transform-origin:0 0;-webkit-text-stroke:0.24px currentColor">70</div>
<div class="t" style="left:613.63px;top:175.05px;font-size:9.8px;font-weight:normal;color:#161616;transform:scaleX(0.9700);transform-origin:0 0;-webkit-text-stroke:0.24px currentColor">95</div>
<div class="t" style="left:36.91px;top:189.00px;font-size:9.8px;font-weight:normal;color:#161616;transform:scaleX(0.9700);transform-origin:0 0;-webkit-text-stroke:0.24px currentColor">2</div>
<div class="t" style="left:86.63px;top:189.00px;font-size:9.8px;font-weight:normal;color:#161616;transform:scaleX(0.9700);transform-origin:0 0;-webkit-text-stroke:0.24px currentColor">40</div>
<div class="t" style="left:150.13px;top:189.00px;font-size:9.8px;font-weight:normal;color:#161616;transform:scaleX(0.9700);transform-origin:0 0;-webkit-text-stroke:0.24px currentColor">54</div>
<div class="t" style="left:212.63px;top:189.00px;font-size:9.8px;font-weight:normal;color:#161616;transform:scaleX(0.9700);transform-origin:0 0;-webkit-text-stroke:0.24px currentColor">65</div>
<div class="t" style="left:291.04px;top:189.00px;font-size:9.8px;font-weight:normal;color:#161616;transform:scaleX(0.9700);transform-origin:0 0;-webkit-text-stroke:0.24px currentColor">110</div>
<div class="t" style="left:341.20px;top:189.00px;font-size:9.8px;font-weight:normal;color:#161616;transform:scaleX(0.9700);transform-origin:0 0;-webkit-text-stroke:0.24px currentColor">0.71</div>
<div class="t" style="left:435.13px;top:189.00px;font-size:9.8px;font-weight:normal;color:#161616;transform:scaleX(0.9700);transform-origin:0 0;-webkit-text-stroke:0.24px currentColor">96</div>
<div class="t" style="left:534.63px;top:189.00px;font-size:9.8px;font-weight:normal;color:#161616;transform:scaleX(0.9700);transform-origin:0 0;-webkit-text-stroke:0.24px currentColor">70</div>
<div class="t" style="left:613.63px;top:189.00px;font-size:9.8px;font-weight:normal;color:#161616;transform:scaleX(0.9700);transform-origin:0 0;-webkit-text-stroke:0.24px currentColor">91</div>
<div class="t" style="left:36.91px;top:202.95px;font-size:9.8px;font-weight:normal;color:#161616;transform:scaleX(0.9700);transform-origin:0 0;-webkit-text-stroke:0.24px currentColor">2</div>
<div class="t" style="left:86.63px;top:202.95px;font-size:9.8px;font-weight:normal;color:#161616;transform:scaleX(0.9700);transform-origin:0 0;-webkit-text-stroke:0.24px currentColor">35</div>
<div class="t" style="left:150.13px;top:202.95px;font-size:9.8px;font-weight:normal;color:#161616;transform:scaleX(0.9700);transform-origin:0 0;-webkit-text-stroke:0.24px currentColor">52</div>
<div class="t" style="left:212.63px;top:202.95px;font-size:9.8px;font-weight:normal;color:#161616;transform:scaleX(0.9700);transform-origin:0 0;-webkit-text-stroke:0.24px currentColor">69</div>
<div class="t" style="left:290.34px;top:202.95px;font-size:9.8px;font-weight:normal;color:#161616;transform:scaleX(0.9700);transform-origin:0 0;-webkit-text-stroke:0.24px currentColor">120</div>
<div class="t" style="left:341.20px;top:202.95px;font-size:9.8px;font-weight:normal;color:#161616;transform:scaleX(0.9700);transform-origin:0 0;-webkit-text-stroke:0.24px currentColor">0.73</div>
<div class="t" style="left:435.13px;top:202.95px;font-size:9.8px;font-weight:normal;color:#161616;transform:scaleX(0.9700);transform-origin:0 0;-webkit-text-stroke:0.24px currentColor">87</div>
<div class="t" style="left:534.63px;top:202.95px;font-size:9.8px;font-weight:normal;color:#161616;transform:scaleX(0.9700);transform-origin:0 0;-webkit-text-stroke:0.24px currentColor">70</div>
<div class="t" style="left:613.63px;top:202.95px;font-size:9.8px;font-weight:normal;color:#161616;transform:scaleX(0.9700);transform-origin:0 0;-webkit-text-stroke:0.24px currentColor">95</div>
<div class="t" style="left:36.91px;top:216.90px;font-size:9.8px;font-weight:normal;color:#161616;transform:scaleX(0.9700);transform-origin:0 0;-webkit-text-stroke:0.24px currentColor">2</div>
<div class="t" style="left:86.63px;top:216.90px;font-size:9.8px;font-weight:normal;color:#161616;transform:scaleX(0.9700);transform-origin:0 0;-webkit-text-stroke:0.24px currentColor">20</div>
<div class="t" style="left:150.13px;top:216.90px;font-size:9.8px;font-weight:normal;color:#161616;transform:scaleX(0.9700);transform-origin:0 0;-webkit-text-stroke:0.24px currentColor">45</div>
<div class="t" style="left:212.63px;top:216.90px;font-size:9.8px;font-weight:normal;color:#161616;transform:scaleX(0.9700);transform-origin:0 0;-webkit-text-stroke:0.24px currentColor">62</div>
<div class="t" style="left:290.34px;top:216.90px;font-size:9.8px;font-weight:normal;color:#161616;transform:scaleX(0.9700);transform-origin:0 0;-webkit-text-stroke:0.24px currentColor">100</div>
<div class="t" style="left:341.20px;top:216.90px;font-size:9.8px;font-weight:normal;color:#161616;transform:scaleX(0.9700);transform-origin:0 0;-webkit-text-stroke:0.24px currentColor">0.72</div>
<div class="t" style="left:435.13px;top:216.90px;font-size:9.8px;font-weight:normal;color:#161616;transform:scaleX(0.9700);transform-origin:0 0;-webkit-text-stroke:0.24px currentColor">85</div>
<div class="t" style="left:534.63px;top:216.90px;font-size:9.8px;font-weight:normal;color:#161616;transform:scaleX(0.9700);transform-origin:0 0;-webkit-text-stroke:0.24px currentColor">70</div>
<div class="t" style="left:613.63px;top:216.90px;font-size:9.8px;font-weight:normal;color:#161616;transform:scaleX(0.9700);transform-origin:0 0;-webkit-text-stroke:0.24px currentColor">86</div>
<div class="t" style="left:36.91px;top:230.85px;font-size:9.8px;font-weight:normal;color:#161616;transform:scaleX(0.9700);transform-origin:0 0;-webkit-text-stroke:0.24px currentColor">2</div>
<div class="t" style="left:86.63px;top:230.85px;font-size:9.8px;font-weight:normal;color:#161616;transform:scaleX(0.9700);transform-origin:0 0;-webkit-text-stroke:0.24px currentColor">24</div>
<div class="t" style="left:150.13px;top:230.85px;font-size:9.8px;font-weight:normal;color:#161616;transform:scaleX(0.9700);transform-origin:0 0;-webkit-text-stroke:0.24px currentColor">57</div>
<div class="t" style="left:212.63px;top:230.85px;font-size:9.8px;font-weight:normal;color:#161616;transform:scaleX(0.9700);transform-origin:0 0;-webkit-text-stroke:0.24px currentColor">64</div>
<div class="t" style="left:291.04px;top:230.85px;font-size:9.8px;font-weight:normal;color:#161616;transform:scaleX(0.9700);transform-origin:0 0;-webkit-text-stroke:0.24px currentColor">110</div>
<div class="t" style="left:341.20px;top:230.85px;font-size:9.8px;font-weight:normal;color:#161616;transform:scaleX(0.9700);transform-origin:0 0;-webkit-text-stroke:0.24px currentColor">0.67</div>
<div class="t" style="left:435.13px;top:230.85px;font-size:9.8px;font-weight:normal;color:#161616;transform:scaleX(0.9700);transform-origin:0 0;-webkit-text-stroke:0.24px currentColor">88</div>
<div class="t" style="left:534.63px;top:230.85px;font-size:9.8px;font-weight:normal;color:#161616;transform:scaleX(0.9700);transform-origin:0 0;-webkit-text-stroke:0.24px currentColor">70</div>
<div class="t" style="left:613.63px;top:230.85px;font-size:9.8px;font-weight:normal;color:#161616;transform:scaleX(0.9700);transform-origin:0 0;-webkit-text-stroke:0.24px currentColor">95</div>
<div class="t" style="left:36.91px;top:244.80px;font-size:9.8px;font-weight:normal;color:#161616;transform:scaleX(0.9700);transform-origin:0 0;-webkit-text-stroke:0.24px currentColor">2</div>
<div class="t" style="left:86.63px;top:244.80px;font-size:9.8px;font-weight:normal;color:#161616;transform:scaleX(0.9700);transform-origin:0 0;-webkit-text-stroke:0.24px currentColor">26</div>
<div class="t" style="left:150.13px;top:244.80px;font-size:9.8px;font-weight:normal;color:#161616;transform:scaleX(0.9700);transform-origin:0 0;-webkit-text-stroke:0.24px currentColor">88</div>
<div class="t" style="left:212.63px;top:244.80px;font-size:9.8px;font-weight:normal;color:#161616;transform:scaleX(0.9700);transform-origin:0 0;-webkit-text-stroke:0.24px currentColor">96</div>
<div class="t" style="left:290.34px;top:244.80px;font-size:9.8px;font-weight:normal;color:#161616;transform:scaleX(0.9700);transform-origin:0 0;-webkit-text-stroke:0.24px currentColor">120</div>
<div class="t" style="left:346.49px;top:244.80px;font-size:9.8px;font-weight:normal;color:#161616;transform:scaleX(0.9700);transform-origin:0 0;-webkit-text-stroke:0.24px currentColor">0.8</div>
<div class="t" style="left:429.84px;top:244.80px;font-size:9.8px;font-weight:normal;color:#161616;transform:scaleX(0.9700);transform-origin:0 0;-webkit-text-stroke:0.24px currentColor">100</div>
<div class="t" style="left:534.63px;top:244.80px;font-size:9.8px;font-weight:normal;color:#161616;transform:scaleX(0.9700);transform-origin:0 0;-webkit-text-stroke:0.24px currentColor">85</div>
<div class="t" style="left:608.34px;top:244.80px;font-size:9.8px;font-weight:normal;color:#161616;transform:scaleX(0.9700);transform-origin:0 0;-webkit-text-stroke:0.24px currentColor">120</div>
<div class="t" style="left:36.91px;top:258.75px;font-size:9.8px;font-weight:normal;color:#161616;transform:scaleX(0.9700);transform-origin:0 0;-webkit-text-stroke:0.24px currentColor">2</div>
<div class="t" style="left:86.63px;top:258.75px;font-size:9.8px;font-weight:normal;color:#161616;transform:scaleX(0.9700);transform-origin:0 0;-webkit-text-stroke:0.24px currentColor">23</div>
<div class="t" style="left:150.13px;top:258.75px;font-size:9.8px;font-weight:normal;color:#161616;transform:scaleX(0.9700);transform-origin:0 0;-webkit-text-stroke:0.24px currentColor">64</div>
<div class="t" style="left:212.63px;top:258.75px;font-size:9.8px;font-weight:normal;color:#161616;transform:scaleX(0.9700);transform-origin:0 0;-webkit-text-stroke:0.24px currentColor">79</div>
<div class="t" style="left:290.34px;top:258.75px;font-size:9.8px;font-weight:normal;color:#161616;transform:scaleX(0.9700);transform-origin:0 0;-webkit-text-stroke:0.24px currentColor">120</div>
<div class="t" style="left:341.20px;top:258.75px;font-size:9.8px;font-weight:normal;color:#161616;transform:scaleX(0.9700);transform-origin:0 0;-webkit-text-stroke:0.24px currentColor">0.75</div>
<div class="t" style="left:429.84px;top:258.75px;font-size:9.8px;font-weight:normal;color:#161616;transform:scaleX(0.9700);transform-origin:0 0;-webkit-text-stroke:0.24px currentColor">101</div>
<div class="t" style="left:534.63px;top:258.75px;font-size:9.8px;font-weight:normal;color:#161616;transform:scaleX(0.9700);transform-origin:0 0;-webkit-text-stroke:0.24px currentColor">70</div>
<div class="t" style="left:608.34px;top:258.75px;font-size:9.8px;font-weight:normal;color:#161616;transform:scaleX(0.9700);transform-origin:0 0;-webkit-text-stroke:0.24px currentColor">106</div>
<div class="t" style="left:36.91px;top:272.70px;font-size:9.8px;font-weight:normal;color:#161616;transform:scaleX(0.9700);transform-origin:0 0;-webkit-text-stroke:0.24px currentColor">1</div>
<div class="t" style="left:86.63px;top:272.70px;font-size:9.8px;font-weight:normal;color:#161616;transform:scaleX(0.9700);transform-origin:0 0;-webkit-text-stroke:0.24px currentColor">21</div>
<div class="t" style="left:150.13px;top:272.70px;font-size:9.8px;font-weight:normal;color:#161616;transform:scaleX(0.9700);transform-origin:0 0;-webkit-text-stroke:0.24px currentColor">62</div>
<div class="t" style="left:212.63px;top:272.70px;font-size:9.8px;font-weight:normal;color:#161616;transform:scaleX(0.9700);transform-origin:0 0;-webkit-text-stroke:0.24px currentColor">78</div>
<div class="t" style="left:291.04px;top:272.70px;font-size:9.8px;font-weight:normal;color:#161616;transform:scaleX(0.9700);transform-origin:0 0;-webkit-text-stroke:0.24px currentColor">115</div>
<div class="t" style="left:346.49px;top:272.70px;font-size:9.8px;font-weight:normal;color:#161616;transform:scaleX(0.9700);transform-origin:0 0;-webkit-text-stroke:0.24px currentColor">0.9</div>
<div class="t" style="left:435.13px;top:272.70px;font-size:9.8px;font-weight:normal;color:#161616;transform:scaleX(0.9700);transform-origin:0 0;-webkit-text-stroke:0.24px currentColor">84</div>
<div class="t" style="left:534.63px;top:272.70px;font-size:9.8px;font-weight:normal;color:#161616;transform:scaleX(0.9700);transform-origin:0 0;-webkit-text-stroke:0.24px currentColor">65</div>
<div class="t" style="left:613.63px;top:272.70px;font-size:9.8px;font-weight:normal;color:#161616;transform:scaleX(0.9700);transform-origin:0 0;-webkit-text-stroke:0.24px currentColor">87</div>
<div class="t" style="left:36.91px;top:286.65px;font-size:9.8px;font-weight:normal;color:#161616;transform:scaleX(0.9700);transform-origin:0 0;-webkit-text-stroke:0.24px currentColor">2</div>
<div class="t" style="left:86.63px;top:286.65px;font-size:9.8px;font-weight:normal;color:#161616;transform:scaleX(0.9700);transform-origin:0 0;-webkit-text-stroke:0.24px currentColor">22</div>
<div class="t" style="left:150.13px;top:286.65px;font-size:9.8px;font-weight:normal;color:#161616;transform:scaleX(0.9700);transform-origin:0 0;-webkit-text-stroke:0.24px currentColor">63</div>
<div class="t" style="left:212.63px;top:286.65px;font-size:9.8px;font-weight:normal;color:#161616;transform:scaleX(0.9700);transform-origin:0 0;-webkit-text-stroke:0.24px currentColor">89</div>
<div class="t" style="left:290.34px;top:286.65px;font-size:9.8px;font-weight:normal;color:#161616;transform:scaleX(0.9700);transform-origin:0 0;-webkit-text-stroke:0.24px currentColor">105</div>
<div class="t" style="left:341.20px;top:286.65px;font-size:9.8px;font-weight:normal;color:#161616;transform:scaleX(0.9700);transform-origin:0 0;-webkit-text-stroke:0.24px currentColor">0.83</div>
<div class="t" style="left:435.13px;top:286.65px;font-size:9.8px;font-weight:normal;color:#161616;transform:scaleX(0.9700);transform-origin:0 0;-webkit-text-stroke:0.24px currentColor">79</div>
<div class="t" style="left:534.63px;top:286.65px;font-size:9.8px;font-weight:normal;color:#161616;transform:scaleX(0.9700);transform-origin:0 0;-webkit-text-stroke:0.24px currentColor">75</div>
<div class="t" style="left:608.34px;top:286.65px;font-size:9.8px;font-weight:normal;color:#161616;transform:scaleX(0.9700);transform-origin:0 0;-webkit-text-stroke:0.24px currentColor">107</div>
<div class="t" style="left:36.91px;top:300.60px;font-size:9.8px;font-weight:normal;color:#161616;transform:scaleX(0.9700);transform-origin:0 0;-webkit-text-stroke:0.24px currentColor">2</div>
<div class="t" style="left:86.63px;top:300.60px;font-size:9.8px;font-weight:normal;color:#161616;transform:scaleX(0.9700);transform-origin:0 0;-webkit-text-stroke:0.24px currentColor">32</div>
<div class="t" style="left:150.13px;top:300.60px;font-size:9.8px;font-weight:normal;color:#161616;transform:scaleX(0.9700);transform-origin:0 0;-webkit-text-stroke:0.24px currentColor">55</div>
<div class="t" style="left:212.63px;top:300.60px;font-size:9.8px;font-weight:normal;color:#161616;transform:scaleX(0.9700);transform-origin:0 0;-webkit-text-stroke:0.24px currentColor">72</div>
<div class="t" style="left:290.34px;top:300.60px;font-size:9.8px;font-weight:normal;color:#161616;transform:scaleX(0.9700);transform-origin:0 0;-webkit-text-stroke:0.24px currentColor">105</div>
<div class="t" style="left:341.20px;top:300.60px;font-size:9.8px;font-weight:normal;color:#161616;transform:scaleX(0.9700);transform-origin:0 0;-webkit-text-stroke:0.24px currentColor">0.72</div>
<div class="t" style="left:435.13px;top:300.60px;font-size:9.8px;font-weight:normal;color:#161616;transform:scaleX(0.9700);transform-origin:0 0;-webkit-text-stroke:0.24px currentColor">83</div>
<div class="t" style="left:534.63px;top:300.60px;font-size:9.8px;font-weight:normal;color:#161616;transform:scaleX(0.9700);transform-origin:0 0;-webkit-text-stroke:0.24px currentColor">80</div>
<div class="t" style="left:608.34px;top:300.60px;font-size:9.8px;font-weight:normal;color:#161616;transform:scaleX(0.9700);transform-origin:0 0;-webkit-text-stroke:0.24px currentColor">100</div>
<div class="t" style="left:36.91px;top:314.55px;font-size:9.8px;font-weight:normal;color:#161616;transform:scaleX(0.9700);transform-origin:0 0;-webkit-text-stroke:0.24px currentColor">1</div>
<div class="t" style="left:86.63px;top:314.55px;font-size:9.8px;font-weight:normal;color:#161616;transform:scaleX(0.9700);transform-origin:0 0;-webkit-text-stroke:0.24px currentColor">21</div>
<div class="t" style="left:150.13px;top:314.55px;font-size:9.8px;font-weight:normal;color:#161616;transform:scaleX(0.9700);transform-origin:0 0;-webkit-text-stroke:0.24px currentColor">74</div>
<div class="t" style="left:212.63px;top:314.55px;font-size:9.8px;font-weight:normal;color:#161616;transform:scaleX(0.9700);transform-origin:0 0;-webkit-text-stroke:0.24px currentColor">75</div>
<div class="t" style="left:290.34px;top:314.55px;font-size:9.8px;font-weight:normal;color:#161616;transform:scaleX(0.9700);transform-origin:0 0;-webkit-text-stroke:0.24px currentColor">160</div>
<div class="t" style="left:341.20px;top:314.55px;font-size:9.8px;font-weight:normal;color:#161616;transform:scaleX(0.9700);transform-origin:0 0;-webkit-text-stroke:0.24px currentColor">0.74</div>
<div class="t" style="left:435.13px;top:314.55px;font-size:9.8px;font-weight:normal;color:#161616;transform:scaleX(0.9700);transform-origin:0 0;-webkit-text-stroke:0.24px currentColor">99</div>
<div class="t" style="left:534.63px;top:314.55px;font-size:9.8px;font-weight:normal;color:#161616;transform:scaleX(0.9700);transform-origin:0 0;-webkit-text-stroke:0.24px currentColor">90</div>
<div class="t" style="left:608.34px;top:314.55px;font-size:9.8px;font-weight:normal;color:#161616;transform:scaleX(0.9700);transform-origin:0 0;-webkit-text-stroke:0.24px currentColor">101</div>
<div class="t" style="left:36.91px;top:328.50px;font-size:9.8px;font-weight:normal;color:#161616;transform:scaleX(0.9700);transform-origin:0 0;-webkit-text-stroke:0.24px currentColor">1</div>
<div class="t" style="left:86.63px;top:328.50px;font-size:9.8px;font-weight:normal;color:#161616;transform:scaleX(0.9700);transform-origin:0 0;-webkit-text-stroke:0.24px currentColor">21</div>
<div class="t" style="left:150.13px;top:328.50px;font-size:9.8px;font-weight:normal;color:#161616;transform:scaleX(0.9700);transform-origin:0 0;-webkit-text-stroke:0.24px currentColor">89</div>
<div class="t" style="left:212.63px;top:328.50px;font-size:9.8px;font-weight:normal;color:#161616;transform:scaleX(0.9700);transform-origin:0 0;-webkit-text-stroke:0.24px currentColor">90</div>
<div class="t" style="left:290.34px;top:328.50px;font-size:9.8px;font-weight:normal;color:#161616;transform:scaleX(0.9700);transform-origin:0 0;-webkit-text-stroke:0.24px currentColor">150</div>
<div class="t" style="left:341.20px;top:328.50px;font-size:9.8px;font-weight:normal;color:#161616;transform:scaleX(0.9700);transform-origin:0 0;-webkit-text-stroke:0.24px currentColor">0.83</div>
<div class="t" style="left:435.13px;top:328.50px;font-size:9.8px;font-weight:normal;color:#161616;transform:scaleX(0.9700);transform-origin:0 0;-webkit-text-stroke:0.24px currentColor">96</div>
<div class="t" style="left:534.63px;top:328.50px;font-size:9.8px;font-weight:normal;color:#161616;transform:scaleX(0.9700);transform-origin:0 0;-webkit-text-stroke:0.24px currentColor">90</div>
<div class="t" style="left:608.34px;top:328.50px;font-size:9.8px;font-weight:normal;color:#161616;transform:scaleX(0.9700);transform-origin:0 0;-webkit-text-stroke:0.24px currentColor">108</div>
<div class="t" style="left:36.91px;top:342.45px;font-size:9.8px;font-weight:normal;color:#161616;transform:scaleX(0.9700);transform-origin:0 0;-webkit-text-stroke:0.24px currentColor">1</div>
<div class="t" style="left:86.63px;top:342.45px;font-size:9.8px;font-weight:normal;color:#161616;transform:scaleX(0.9700);transform-origin:0 0;-webkit-text-stroke:0.24px currentColor">20</div>
<div class="t" style="left:150.13px;top:342.45px;font-size:9.8px;font-weight:normal;color:#161616;transform:scaleX(0.9700);transform-origin:0 0;-webkit-text-stroke:0.24px currentColor">79</div>
<div class="t" style="left:212.63px;top:342.45px;font-size:9.8px;font-weight:normal;color:#161616;transform:scaleX(0.9700);transform-origin:0 0;-webkit-text-stroke:0.24px currentColor">90</div>
<div class="t" style="left:290.34px;top:342.45px;font-size:9.8px;font-weight:normal;color:#161616;transform:scaleX(0.9700);transform-origin:0 0;-webkit-text-stroke:0.24px currentColor">130</div>
<div class="t" style="left:341.20px;top:342.45px;font-size:9.8px;font-weight:normal;color:#161616;transform:scaleX(0.9700);transform-origin:0 0;-webkit-text-stroke:0.24px currentColor">0.84</div>
<div class="t" style="left:435.13px;top:342.45px;font-size:9.8px;font-weight:normal;color:#161616;transform:scaleX(0.9700);transform-origin:0 0;-webkit-text-stroke:0.24px currentColor">85</div>
<div class="t" style="left:534.63px;top:342.45px;font-size:9.8px;font-weight:normal;color:#161616;transform:scaleX(0.9700);transform-origin:0 0;-webkit-text-stroke:0.24px currentColor">95</div>
<div class="t" style="left:608.34px;top:342.45px;font-size:9.8px;font-weight:normal;color:#161616;transform:scaleX(0.9700);transform-origin:0 0;-webkit-text-stroke:0.24px currentColor">107</div>
<svg class="a" style="left:0;top:0" width="825" height="510"><path d="M631,111 L644.2,97.7 L644.2,104.4 L687.3,104.4 L687.3,117.7 L644.2,117.7 L644.2,124.4 Z" fill="#b9cde5" stroke="#385d8a" stroke-width="1.6" stroke-linejoin="miter"/></svg>
<div class="a" style="left:691.8px;top:96.9px;width:140px;height:85.3px;background:#e46c0a"></div>
<div class="t" style="left:698.00px;top:102.05px;font-size:8.8px;font-weight:bold;color:#fff;transform:scaleX(1.0303);transform-origin:0 0;">Variabilele (testele sau măsurările</div>
<div class="t" style="left:698.00px;top:114.45px;font-size:8.8px;font-weight:bold;color:#fff;transform:scaleX(1.0303);transform-origin:0 0;">efectuate) sunt şsezate în coloane</div>
<div class="t" style="left:698.00px;top:126.85px;font-size:8.8px;font-weight:bold;color:#fff;transform:scaleX(1.0303);transform-origin:0 0;">verticale.</div>
<div class="t" style="left:698.00px;top:151.65px;font-size:8.8px;font-weight:bold;color:#fff;transform:scaleX(1.0303);transform-origin:0 0;">Numele variabilelor se aşează pe</div>
<div class="t" style="left:698.00px;top:164.05px;font-size:8.8px;font-weight:bold;color:#fff;transform:scaleX(1.0303);transform-origin:0 0;">prima linie orizontală.</div>
<div class="a" style="left:21.6px;top:370.8px;width:214.7px;height:43.9px;background:#b1a0c7"></div>
<div class="t" style="left:28.50px;top:375.28px;font-size:10.3px;font-weight:normal;color:#fff;transform:scaleX(0.9741);transform-origin:0 0;-webkit-text-stroke:0.1px currentColor">Codificările anumitor variabile trebuie trimise</div>
<div class="t" style="left:28.50px;top:387.58px;font-size:10.3px;font-weight:normal;color:#fff;transform:scaleX(0.9080);transform-origin:0 0;-webkit-text-stroke:0.1px currentColor">separat (1=feminin şi 2= masculin) sau pot fi</div>
<div class="t" style="left:28.50px;top:399.88px;font-size:10.3px;font-weight:normal;color:#fff;transform:scaleX(0.9445);transform-origin:0 0;-webkit-text-stroke:0.1px currentColor">completate necodificat</div>
<svg class="a" style="left:0;top:0" width="825" height="510"><g stroke="#6f93c4" stroke-width="0.9" fill="none"><line x1="30.4" y1="344.5" x2="30.4" y2="370.8"/><polyline points="26.7,349.8 30.4,344.2 34.1,349.8"/></g></svg>
<div class="a" style="left:-5px;top:434.3px;width:139.9px;height:20.1px;background:#31859c"></div>
<div class="t" style="left:-0.96px;top:438.97px;font-size:9.6px;font-weight:bold;color:#fff;transform:scaleX(0.9215);transform-origin:0 0;-webkit-text-stroke:0.1px currentColor">le sunt aşezate pe orizontală</div>
<div class="a" style="left:793.4px;top:349.1px;width:40px;height:10.3px;background:linear-gradient(rgba(240,245,251,.75),rgba(228,236,246,.75));border:1px solid #c9d8ec;border-radius:2px"></div>
<div class="t" style="left:809.50px;top:351.35px;font-size:6.2px;font-weight:normal;color:#333;transform:scaleX(1.0000);transform-origin:0 0;-webkit-text-stroke:0.05px currentColor">Take Screenshot</div>
<div class="a" style="left:-5px;top:492.6px;width:840px;height:9px;background:#c9daee;border-top:1px solid #9fb6d2"></div>
<svg class="a" style="left:0;top:492px" width="30" height="10"><path d="M0,9.5 L6,1 L21,1 L14,9.5 Z" fill="#dfe9f5" stroke="#9fb3cc" stroke-width="0.7"/><ellipse cx="10.2" cy="5.8" rx="3" ry="2.1" fill="#f2f5f9" stroke="#7d8ea8" stroke-width="0.7"/><circle cx="7.2" cy="3.9" r="1.5" fill="#f0a030"/></svg>
<div class="a" style="left:504px;top:493.6px;width:3px;height:7px;background:#f4f7fb;border:0.5px solid #9ab"></div>
<div class="a" style="left:507.5px;top:493.6px;width:8.5px;height:7.5px;background:#c7d7ea"></div>
<div class="a" style="left:510px;top:495px;width:0;height:0;border-top:2.3px solid transparent;border-bottom:2.3px solid transparent;border-right:2.6px solid #1e2d44"></div>
<div class="a" style="left:516px;top:493.4px;width:315px;height:8.1px;background:linear-gradient(#b9cde6,#a3bcdb);border:1px solid #8ba6c8;border-radius:1.5px"></div>
<div class="a" style="left:679px;top:495.6px;width:4px;height:3.5px;background:repeating-linear-gradient(#7f97b6 0 0.7px,transparent 0.7px 1.4px)"></div>
<div class="a" style="left:-5px;top:501.6px;width:840px;height:14px;background:linear-gradient(#9fb5d0 0px,#b9cbe0 0.8px,#dce6f3 1.6px,#c4d4e8 8.4px,#c4d4e8 14px)"></div>
<div class="t" style="left:637.90px;top:503.27px;font-size:6.3px;font-weight:normal;color:#2f3f58;transform:scaleX(0.8638);transform-origin:0 0;-webkit-text-stroke:0.12px currentColor">Medie: 57.1331875</div>
<div class="t" style="left:693.00px;top:503.27px;font-size:6.3px;font-weight:normal;color:#2f3f58;transform:scaleX(0.9021);transform-origin:0 0;-webkit-text-stroke:0.12px currentColor">Contor: 170</div>
<div class="t" style="left:730.80px;top:503.27px;font-size:6.3px;font-weight:normal;color:#2f3f58;transform:scaleX(0.8354);transform-origin:0 0;-webkit-text-stroke:0.12px currentColor">Sumă: 9141.31</div>
<div class="a" style="left:772px;top:502.5px;width:0.8px;height:7px;background:#aab9cc"></div>
<svg class="a" style="left:760px;top:500px" width="65" height="10"><rect x="15.2" y="2.4" width="8.6" height="8" rx="1" fill="#fbe7a6" stroke="#e8b84a" stroke-width="0.9"/><g fill="#8d96a3"><rect x="17" y="4" width="0.8" height="5"/><rect x="18.6" y="4" width="0.8" height="5"/><rect x="20.2" y="4" width="0.8" height="5"/><rect x="21.8" y="4" width="0.8" height="5"/></g><rect x="26.2" y="3" width="6.2" height="7" fill="#9ca3ad"/><rect x="27.6" y="5" width="3.4" height="3" fill="#e6e9ee"/><rect x="34.8" y="3" width="7" height="7" fill="#a7aeb8"/><rect x="35.8" y="4" width="3.2" height="3" fill="#eef1f5"/><rect x="39.4" y="4" width="1.6" height="3" fill="#eef1f5"/></svg>
<div class="t" style="left:807.80px;top:503.27px;font-size:6.3px;font-weight:normal;color:#2f3f58;transform:scaleX(0.8192);transform-origin:0 0;-webkit-text-stroke:0.12px currentColor">140%</div></div></div></body></html>
